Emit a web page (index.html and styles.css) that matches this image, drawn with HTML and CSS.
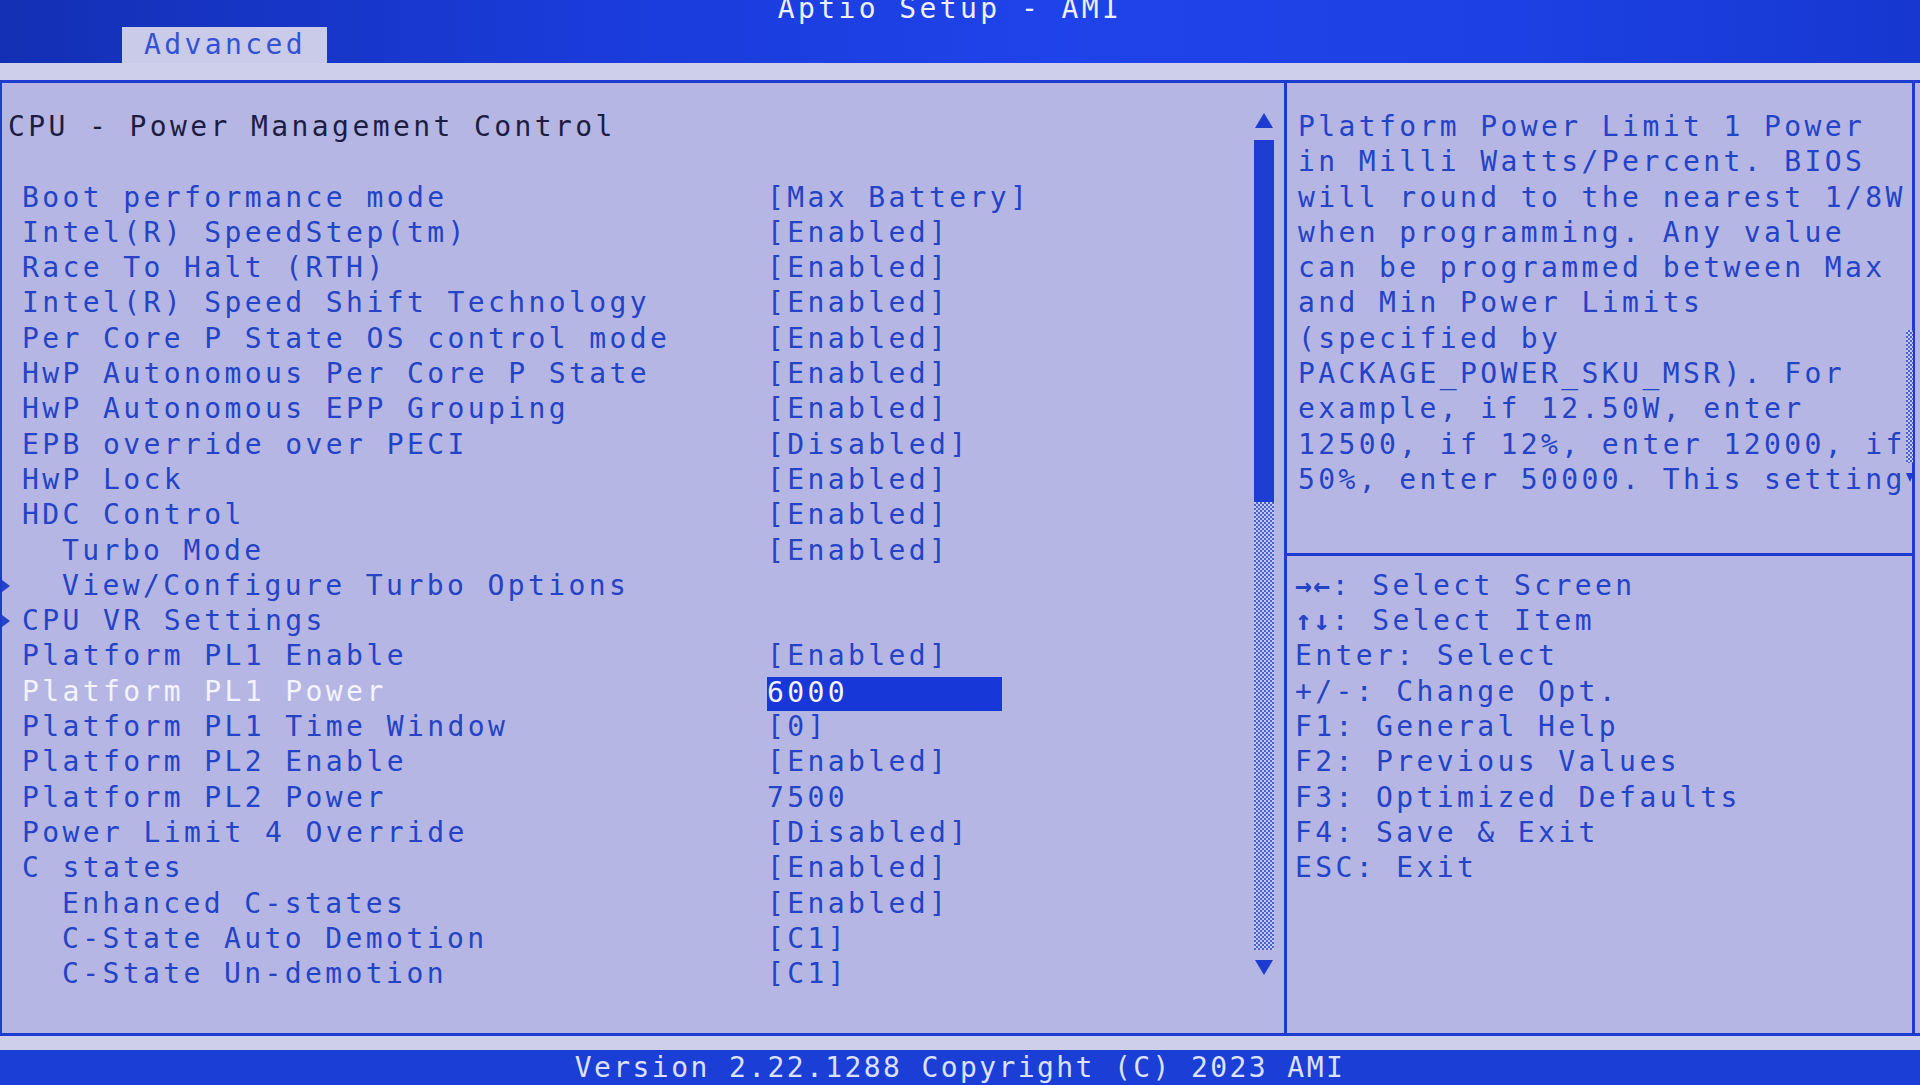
FILE: index.html
```html
<!DOCTYPE html>
<html>
<head>
<meta charset="utf-8">
<title>Aptio Setup - AMI</title>
<link rel="stylesheet" href="styles.css">
</head>
<body>
<div class="screen">
  <header class="topbar">
    <div class="title">Aptio Setup - AMI</div>
    <nav class="tabs"><div class="tab">Advanced</div></nav>
  </header>
  <div class="band"></div>
  <main class="frame">
    <section class="left">
      <div class="list">
        <div class="heading">CPU - Power Management Control</div>
        <div class="row"></div>
        <div class="row"><span class="g"></span><span class="label">Boot performance mode</span><span class="value">[Max Battery]</span></div>
        <div class="row"><span class="g"></span><span class="label">Intel(R) SpeedStep(tm)</span><span class="value">[Enabled]</span></div>
        <div class="row"><span class="g"></span><span class="label">Race To Halt (RTH)</span><span class="value">[Enabled]</span></div>
        <div class="row"><span class="g"></span><span class="label">Intel(R) Speed Shift Technology</span><span class="value">[Enabled]</span></div>
        <div class="row"><span class="g"></span><span class="label">Per Core P State OS control mode</span><span class="value">[Enabled]</span></div>
        <div class="row"><span class="g"></span><span class="label">HwP Autonomous Per Core P State</span><span class="value">[Enabled]</span></div>
        <div class="row"><span class="g"></span><span class="label">HwP Autonomous EPP Grouping</span><span class="value">[Enabled]</span></div>
        <div class="row"><span class="g"></span><span class="label">EPB override over PECI</span><span class="value">[Disabled]</span></div>
        <div class="row"><span class="g"></span><span class="label">HwP Lock</span><span class="value">[Enabled]</span></div>
        <div class="row"><span class="g"></span><span class="label">HDC Control</span><span class="value">[Enabled]</span></div>
        <div class="row"><span class="g"></span><span class="label ind">Turbo Mode</span><span class="value">[Enabled]</span></div>
        <div class="row"><span class="g sub"></span><span class="label ind">View/Configure Turbo Options</span><span class="value"></span></div>
        <div class="row"><span class="g sub"></span><span class="label">CPU VR Settings</span><span class="value"></span></div>
        <div class="row"><span class="g"></span><span class="label">Platform PL1 Enable</span><span class="value">[Enabled]</span></div>
        <div class="row"><span class="g"></span><span class="label active">Platform PL1 Power</span><span class="value sel">6000</span></div>
        <div class="row"><span class="g"></span><span class="label">Platform PL1 Time Window</span><span class="value">[0]</span></div>
        <div class="row"><span class="g"></span><span class="label">Platform PL2 Enable</span><span class="value">[Enabled]</span></div>
        <div class="row"><span class="g"></span><span class="label">Platform PL2 Power</span><span class="value">7500</span></div>
        <div class="row"><span class="g"></span><span class="label">Power Limit 4 Override</span><span class="value">[Disabled]</span></div>
        <div class="row"><span class="g"></span><span class="label">C states</span><span class="value">[Enabled]</span></div>
        <div class="row"><span class="g"></span><span class="label ind">Enhanced C-states</span><span class="value">[Enabled]</span></div>
        <div class="row"><span class="g"></span><span class="label ind">C-State Auto Demotion</span><span class="value">[C1]</span></div>
        <div class="row"><span class="g"></span><span class="label ind">C-State Un-demotion</span><span class="value">[C1]</span></div>
      </div>
      <div class="scroll">
        <div class="up"></div>
        <div class="thumb"></div>
        <div class="track"></div>
        <div class="down"></div>
      </div>
    </section>
    <section class="right">
      <div class="help">
        <div class="help-text">
          <div>Platform Power Limit 1 Power</div>
          <div>in Milli Watts/Percent. BIOS</div>
          <div>will round to the nearest 1/8W</div>
          <div>when programming. Any value</div>
          <div>can be programmed between Max</div>
          <div>and Min Power Limits</div>
          <div>(specified by</div>
          <div>PACKAGE_POWER_SKU_MSR). For</div>
          <div>example, if 12.50W, enter</div>
          <div>12500, if 12%, enter 12000, if</div>
          <div>50%, enter 50000. This setting</div>
        </div>
        <div class="help-scroll">
          <div class="hs-track"></div>
          <div class="hs-down"></div>
        </div>
      </div>
      <div class="sep"></div>
      <div class="keys">
        <div class="key"><span class="arr">→←</span>: Select Screen</div>
        <div class="key"><span class="arr">↑↓</span>: Select Item</div>
        <div class="key">Enter: Select</div>
        <div class="key">+/-: Change Opt.</div>
        <div class="key">F1: General Help</div>
        <div class="key">F2: Previous Values</div>
        <div class="key">F3: Optimized Defaults</div>
        <div class="key">F4: Save &amp; Exit</div>
        <div class="key">ESC: Exit</div>
      </div>
    </section>
  </main>
  <div class="band2"></div>
  <footer class="footer">Version 2.22.1288 Copyright (C) 2023 AMI</footer>
</div>
</body>
</html>
```

FILE: styles.css
```css
* {
  box-sizing: border-box;
  margin: 0;
  padding: 0;
}

html, body {
  width: 1920px;
  height: 1085px;
  overflow: hidden;
}

body {
  background: #cdd0e8;
  font-family: "DejaVu Sans Mono", "Liberation Mono", monospace;
  font-size: 28px;
  letter-spacing: 3.4px;
  color: #2443c6;
  white-space: nowrap;
}

.screen {
  display: flex;
  flex-direction: column;
  height: 1085px;
}

/* header */
.topbar {
  flex: none;
  height: 63px;
  display: flex;
  flex-direction: column;
  background: linear-gradient(90deg, #1330b4 0%, #1a3bd9 30%, #1f43ea 55%, #1c40e2 80%, #1737d0 100%);
}

.title {
  margin-top: -5px;
  padding-right: 20px;
  line-height: 27px;
  text-align: center;
  color: #eef0ff;
}

.tabs {
  margin-top: 5px;
  padding-left: 122px;
  display: flex;
}

.tab {
  width: 205px;
  height: 36px;
  line-height: 36px;
  padding-left: 22px;
  background: #c9cbe9;
  color: #3452d4;
}

.band {
  flex: none;
  height: 17px;
}

/* main frame */
.frame {
  flex: none;
  height: 956px;
  display: flex;
  border-top: 3px solid #1d3bcf;
  border-bottom: 3px solid #1d3bcf;
  border-left: 2px solid #1d3bcf;
  background: #b5b6e3;
}

.left {
  width: 1282px;
  display: flex;
  padding-top: 26px;
  padding-right: 8px;
}

.list {
  width: 1252px;
  line-height: 35.3px;
}

.heading {
  height: 35.3px;
  padding-left: 6px;
  color: #1d1d44;
}

.row {
  height: 35.3px;
  display: grid;
  grid-template-columns: 20px 745px 1fr;
  align-items: start;
}

.g {
  height: 35.3px;
  position: relative;
}

.g.sub::before {
  content: "";
  position: absolute;
  left: 0;
  top: 12px;
  border-top: 6px solid transparent;
  border-bottom: 6px solid transparent;
  border-left: 8px solid #2443c6;
}

.ind {
  padding-left: 40px;
}

.label.active {
  color: #f3f4ff;
}

.value.sel {
  justify-self: start;
  width: 235px;
  height: 34px;
  margin-top: 3px;
  line-height: 32px;
  background: #1737d8;
  color: #f3f4ff;
}

/* scrollbar */
.scroll {
  width: 20px;
  display: flex;
  flex-direction: column;
  align-items: center;
}

.up {
  margin-top: 4px;
  border-left: 9px solid transparent;
  border-right: 9px solid transparent;
  border-bottom: 15px solid #1d3bcf;
}

.thumb {
  margin-top: 12px;
  width: 20px;
  height: 362px;
  background: #1e3dd3;
}

.track {
  width: 20px;
  height: 448px;
  background: repeating-conic-gradient(#4a62cf 0 25%, #c6c9ee 0 50%) 0 0 / 4px 4px;
}

.down {
  margin-top: 10px;
  border-left: 9px solid transparent;
  border-right: 9px solid transparent;
  border-top: 15px solid #1d3bcf;
}

/* right panel */
.right {
  width: 631px;
  padding-top: 26px;
  border-left: 3px solid #1d3bcf;
  border-right: 3px solid #1d3bcf;
  line-height: 35.3px;
}

.help {
  display: flex;
  padding-left: 11px;
}

.help-text {
  flex: 1;
}

.help-scroll {
  width: 8px;
  margin-top: 221px;
  display: flex;
  flex-direction: column;
  align-items: center;
}

.hs-track {
  width: 7px;
  height: 133px;
  background: repeating-conic-gradient(#4a62cf 0 25%, #c6c9ee 0 50%) 0 0 / 4px 4px;
}

.hs-down {
  margin-top: 10px;
  border-left: 4px solid transparent;
  border-right: 4px solid transparent;
  border-top: 9px solid #1d3bcf;
}

.sep {
  height: 3px;
  margin-top: 55.7px;
  margin-bottom: 11.9px;
  background: #1d3bcf;
}

.keys {
  padding-left: 8px;
}

.key {
  height: 35.3px;
}

.arr {
  font-weight: bold;
  letter-spacing: 1.5px;
}

.band2 {
  flex: none;
  height: 14px;
}

.footer {
  flex: none;
  height: 35px;
  line-height: 35px;
  text-align: center;
  letter-spacing: 2.4px;
  background: #1b3ed6;
  color: #dde0ff;
}
```
